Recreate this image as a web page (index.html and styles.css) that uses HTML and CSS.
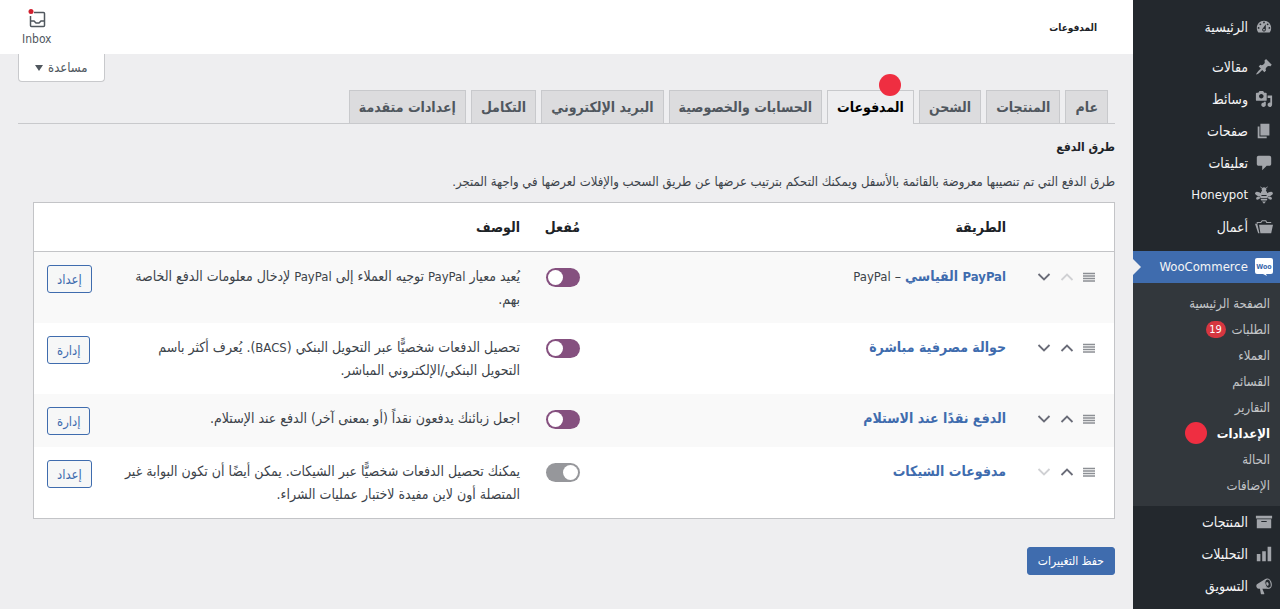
FILE: index.html
```
<!DOCTYPE html>
<html lang="ar" dir="rtl">
<head>
    <meta charset="UTF-8">
    <meta name="viewport" content="width=device-width, initial-scale=1.0">
    <title>المدفوعات</title>
    <link rel="stylesheet" href="styles.css">
</head>
<body>

    <svg class="sprite" aria-hidden="true">
        <symbol id="i-menu" viewBox="0 0 12 10"><path d="M0 1.500h12M0 4h12M0 6.500h12M0 9h12" stroke="currentColor" stroke-width="1.500"/></symbol>
        <symbol id="i-up" viewBox="0 0 14 10"><path d="M1.500 8L7 2.500L12.500 8" fill="none" stroke="currentColor" stroke-width="1.800"/></symbol>
        <symbol id="i-down" viewBox="0 0 14 10"><path d="M1.500 2L7 7.500L12.500 2" fill="none" stroke="currentColor" stroke-width="1.800"/></symbol>
    </svg>

    <nav class="sidebar">
        <ul class="menu">
            <li><a href="#"><svg class="icon" viewBox="0 0 20 20"><path d="M3.760 16h12.480c1.100-1.370 1.760-3.110 1.760-5 0-4.420-3.580-8-8-8s-8 3.580-8 8c0 1.890.66 3.630 1.760 5zM10 4c.55 0 1 .45 1 1s-.45 1-1 1-1-.45-1-1 .45-1 1-1zM6 6c.55 0 1 .45 1 1s-.45 1-1 1-1-.45-1-1 .45-1 1-1zm8 0c.55 0 1 .45 1 1s-.45 1-1 1-1-.45-1-1 .45-1 1-1zm-5.370 5.550L12 7v6c0 1.100-.9 2-2 2s-2-.9-2-2c0-.57.24-1.080.63-1.450zM4 10c.55 0 1 .45 1 1s-.45 1-1 1-1-.45-1-1 .45-1 1-1zm12 0c.55 0 1 .45 1 1s-.45 1-1 1-1-.45-1-1 .45-1 1-1zm-5 3c0-.55-.45-1-1-1s-1 .45-1 1 .45 1 1 1 1-.45 1-1z"/></svg>الرئيسية</a></li>
        </ul>
        <ul class="menu">
            <li><a href="#"><svg class="icon" viewBox="0 0 20 20"><path d="M10.440 3.020l1.820-1.820 6.360 6.350-1.830 1.820c-1.050-.68-2.480-.57-3.410.36l-.75.75c-.92.93-1.040 2.350-.35 3.410l-1.830 1.820-2.410-2.410-2.800 2.790c-.42.42-3.380 2.710-3.800 2.290s1.860-3.390 2.280-3.810l2.790-2.790L4.100 9.360l1.830-1.820c1.050.69 2.480.57 3.400-.36l.75-.75c.93-.92 1.050-2.350.36-3.410z"/></svg>مقالات</a></li>
            <li><a href="#"><svg class="icon" viewBox="0 0 20 20"><path d="M13 11V4c0-.55-.45-1-1-1h-1.670L9 1H5L3.670 3H2c-.55 0-1 .45-1 1v7c0 .55.45 1 1 1h10c.55 0 1-.45 1-1zM7 4.500c1.380 0 2.500 1.120 2.500 2.500S8.380 9.500 7 9.500 4.500 8.380 4.500 7 5.620 4.500 7 4.500zM14 6h5v10.500c0 1.380-1.120 2.500-2.500 2.500S14 17.880 14 16.500s1.120-2.500 2.500-2.500c.17 0 .34.020.5.050V9h-3V6zm-4 8.050V13h2v3.500c0 1.380-1.120 2.500-2.500 2.500S7 17.880 7 16.500 8.120 14 9.500 14c.17 0 .34.020.5.050z"/></svg>وسائط</a></li>
            <li><a href="#"><svg class="icon" viewBox="0 0 20 20"><path d="M6 15V2h10v13H6zm-1 1h8v2H3V5h2v11z"/></svg>صفحات</a></li>
            <li><a href="#"><svg class="icon" viewBox="0 0 20 20"><path d="M4 2h12c1.100 0 2 .9 2 2v7c0 1.100-.9 2-2 2h-3l-5 5v-5H4c-1.100 0-2-.9-2-2V4c0-1.100.9-2 2-2z"/></svg>تعليقات</a></li>
            <li><a href="#"><svg class="icon" viewBox="0 0 20 20"><circle cx="10" cy="4" r="2.600"/><path d="M6.500 8a3.500 3 0 0 1 7 0v2h-7zM5.500 11h9l-.5 2.200H6zM6 14.200h8L13 16.200H7zM7.800 17.200h4.400L10 19.700z"/><ellipse cx="3.800" cy="9" rx="3.800" ry="2.200" transform="rotate(20 3.800 9)"/><ellipse cx="16.200" cy="9" rx="3.800" ry="2.200" transform="rotate(-20 16.200 9)"/><ellipse cx="3.400" cy="13.400" rx="2.300" ry="1.600" transform="rotate(-25 3.400 13.400)"/><ellipse cx="16.600" cy="13.400" rx="2.300" ry="1.600" transform="rotate(25 16.600 13.400)"/><path d="M8.500 3L6 1M11.500 3L14 1" stroke="currentColor"/></svg><span class="latin">Honeypot</span></a></li>
            <li><a href="#"><svg class="icon" viewBox="0 0 20 20"><path d="M3.500 17L0 6.500h2.500L5 17zM4.500 7.500H20L18 17H6z"/><path d="M2.500 6.500V5h4L8 3h4l1 2h5" fill="none" stroke="currentColor" stroke-width="1.200"/></svg>أعمال</a></li>
        </ul>
        <ul class="menu">
            <li class="current">
                <a href="#"><svg class="icon woo" viewBox="0 0 18 18"><path d="M2 0h14a2 2 0 0 1 2 2v12a2 2 0 0 1-2 2h-5l1 2-4-2H2a2 2 0 0 1-2-2V2a2 2 0 0 1 2-2z"/><text x="9" y="11" text-anchor="middle">Woo</text></svg><span class="latin">WooCommerce</span></a>
                <ul class="submenu">
                    <li><a href="#">الصفحة الرئيسية</a></li>
                    <li><a href="#">الطلبات <span class="count">19</span></a></li>
                    <li><a href="#">العملاء</a></li>
                    <li><a href="#">القسائم</a></li>
                    <li><a href="#">التقارير</a></li>
                    <li><a href="#" class="active">الإعدادات <span class="dot"></span></a></li>
                    <li><a href="#">الحالة</a></li>
                    <li><a href="#">الإضافات</a></li>
                </ul>
            </li>
            <li><a href="#"><svg class="icon" viewBox="0 0 20 20"><path d="M19 3v3H1V3h18zM2 7h16v10H2V7zm11 3V9H7v1h6z"/></svg>المنتجات</a></li>
            <li><a href="#"><svg class="icon" viewBox="0 0 20 20"><path d="M18 18V2h-4v16h4zm-6 0V7H8v11h4zm-6 0v-8H2v8h4z"/></svg>التحليلات</a></li>
            <li><a href="#"><svg class="icon" viewBox="0 0 20 20"><path d="M12 2L3 7.400C1.600 8 1.200 9.600 1.600 10.900c.4 1.400 1.500 2.300 2.600 2.200h1.300l1 5.500c0 .3.200.5.500.5h3c.3 0 .5-.3.400-.5L8.200 13h7z"/><ellipse cx="14.500" cy="7.400" rx="3.400" ry="5.200" fill="#23282d" stroke="currentColor" stroke-width="1.300" transform="rotate(-15 14.500 7.400)"/><ellipse cx="13.800" cy="7.600" rx="1.300" ry="2.200" transform="rotate(-15 13.800 7.600)"/></svg>التسويق</a></li>
        </ul>
    </nav>

    <div class="content">
        <header class="topbar">
            <h1>المدفوعات</h1>
            <button class="inbox">
                <svg viewBox="0 0 20 20"><path d="M7 3.500h9.500a1 1 0 0 1 1 1v12a1 1 0 0 1-1 1h-12a1 1 0 0 1-1-1V7M3.500 12H7l2 2h3l2-2h3.500" fill="none" stroke="currentColor" stroke-width="1.500"/><circle cx="4" cy="2.500" r="2.500" fill="#d0202e"/></svg>
                Inbox
            </button>
        </header>

        <main class="wrap">
            <button class="help">مساعدة <span class="caret"></span></button>

            <nav class="tabs">
                <a href="#">عام</a>
                <a href="#">المنتجات</a>
                <a href="#">الشحن</a>
                <a href="#" class="active">المدفوعات<span class="dot"></span></a>
                <a href="#">الحسابات والخصوصية</a>
                <a href="#">البريد الإلكتروني</a>
                <a href="#">التكامل</a>
                <a href="#">إعدادات متقدمة</a>
            </nav>

            <h2>طرق الدفع</h2>
            <p class="intro">طرق الدفع التي تم تنصيبها معروضة بالقائمة بالأسفل ويمكنك التحكم بترتيب عرضها عن طريق السحب والإفلات لعرضها في واجهة المتجر.</p>

            <table class="gateways">
                <thead>
                    <tr>
                        <th class="sort"></th>
                        <th>الطريقة</th>
                        <th class="status">مُفعل</th>
                        <th>الوصف</th>
                        <th class="action"></th>
                    </tr>
                </thead>
                <tbody>
                    <tr>
                        <td><div class="handles"><svg class="grip"><use href="#i-menu"/></svg><button disabled aria-label="أعلى"><svg><use href="#i-up"/></svg></button><button aria-label="أسفل"><svg><use href="#i-down"/></svg></button></div></td>
                        <td><a href="#"><span class="latin">PayPal</span> القياسي</a> – <span class="latin">PayPal</span></td>
                        <td><input type="checkbox" class="toggle" aria-label="PayPal" checked></td>
                        <td>يُعيد معيار <span class="latin">PayPal</span> توجيه العملاء إلى <span class="latin">PayPal</span> لإدخال معلومات الدفع الخاصة بهم.</td>
                        <td class="action"><button class="button">إعداد</button></td>
                    </tr>
                    <tr>
                        <td><div class="handles"><svg class="grip"><use href="#i-menu"/></svg><button aria-label="أعلى"><svg><use href="#i-up"/></svg></button><button aria-label="أسفل"><svg><use href="#i-down"/></svg></button></div></td>
                        <td><a href="#">حوالة مصرفية مباشرة</a></td>
                        <td><input type="checkbox" class="toggle" aria-label="حوالة مصرفية مباشرة" checked></td>
                        <td>تحصيل الدفعات شخصيًّا عبر التحويل البنكي (<span class="latin">BACS</span>). يُعرف أكثر باسم التحويل البنكي/الإلكتروني المباشر.</td>
                        <td class="action"><button class="button">إدارة</button></td>
                    </tr>
                    <tr>
                        <td><div class="handles"><svg class="grip"><use href="#i-menu"/></svg><button aria-label="أعلى"><svg><use href="#i-up"/></svg></button><button aria-label="أسفل"><svg><use href="#i-down"/></svg></button></div></td>
                        <td><a href="#">الدفع نقدًا عند الاستلام</a></td>
                        <td><input type="checkbox" class="toggle" aria-label="الدفع نقدًا عند الاستلام" checked></td>
                        <td>اجعل زبائنك يدفعون نقداً (أو بمعنى آخر) الدفع عند الإستلام.</td>
                        <td class="action"><button class="button">إدارة</button></td>
                    </tr>
                    <tr>
                        <td><div class="handles"><svg class="grip"><use href="#i-menu"/></svg><button aria-label="أعلى"><svg><use href="#i-up"/></svg></button><button disabled aria-label="أسفل"><svg><use href="#i-down"/></svg></button></div></td>
                        <td><a href="#">مدفوعات الشيكات</a></td>
                        <td><input type="checkbox" class="toggle" aria-label="مدفوعات الشيكات"></td>
                        <td>يمكنك تحصيل الدفعات شخصيًّا عبر الشيكات. يمكن أيضًا أن تكون البوابة غير المتصلة أون لاين مفيدة لاختبار عمليات الشراء.</td>
                        <td class="action"><button class="button">إعداد</button></td>
                    </tr>
                </tbody>
            </table>

            <button class="button primary">حفظ التغييرات</button>
        </main>
    </div>

</body>
</html>
```
FILE: styles.css
```
* {
    margin: 0;
    padding: 0;
    box-sizing: border-box;
}

body {
    display: flex;
    min-height: 100vh;
    background: #eeeef0;
    color: #3c434a;
    font-family: "DejaVu Sans Condensed", "DejaVu Sans", sans-serif;
    font-size: 13px;
    line-height: 23px;
}

a {
    color: #3f6cae;
    text-decoration: none;
}

ul {
    list-style: none;
}

button {
    font-family: inherit;
    font-size: 13px;
    cursor: pointer;
}

.sprite {
    display: none;
}

/* latin glyphs look bigger than the arabic ones */
.latin {
    font-size: 13px;
    line-height: 20px;
}

.dot {
    width: 22px;
    height: 22px;
    border-radius: 50%;
    background: #ef2e41;
}

/* sidebar */
.sidebar {
    flex: 0 0 147px;
    padding-top: 11px;
    background: #23282d;
}

.menu {
    margin-bottom: 8px;
}

.menu:last-child {
    margin-bottom: 0;
}

.menu > li > a {
    display: flex;
    align-items: center;
    gap: 7px;
    height: 32px;
    padding-right: 7px;
    color: #f4f4f5;
    font-size: 14px;
}

.icon {
    width: 18px;
    height: 18px;
    color: #a2a5aa;
    fill: currentColor;
}

.woo {
    color: #fff;
}

.woo text {
    fill: #3f6cae;
    font-size: 7px;
    font-weight: bold;
}

.current {
    position: relative;
}

.current > a {
    background: #3f6cae;
}

.current::after {
    content: "";
    position: absolute;
    left: 0;
    top: 8px;
    border: 8px solid transparent;
    border-left-color: #eeeef0;
    border-right-width: 0;
}

.submenu {
    padding: 7px 10px 8px;
    background: #32373c;
}

.submenu a {
    display: flex;
    align-items: center;
    gap: 6px;
    height: 26px;
    color: #c3c5c8;
}

.submenu .active {
    color: #fff;
    font-weight: bold;
    gap: 10px;
}

.count {
    width: 20px;
    height: 17px;
    border-radius: 9px;
    background: #d63640;
    color: #fff;
    font-size: 11px;
    line-height: 17px;
    text-align: center;
}

/* page */
.content {
    flex: 1;
    min-width: 0;
}

.topbar {
    display: flex;
    align-items: center;
    justify-content: space-between;
    height: 54px;
    padding: 0 36px 0 22px;
    background: #fff;
}

.topbar h1 {
    color: #1d2327;
    font-size: 10px;
}

.inbox {
    display: flex;
    flex-direction: column;
    align-items: center;
    padding-top: 3px;
    border: 0;
    background: none;
    color: #50575e;
    font-size: 12px;
    line-height: 20px;
}

.inbox svg {
    width: 20px;
    height: 20px;
}

.wrap {
    display: flex;
    flex-direction: column;
    align-items: flex-start;
    padding: 0 18px;
}

.help {
    display: flex;
    align-items: center;
    align-self: flex-end;
    gap: 5px;
    height: 28px;
    padding: 0 16px;
    border: 1px solid #c8c9cc;
    border-top: 0;
    border-radius: 0 0 4px 4px;
    background: #fff;
    color: #50575e;
}

.caret {
    border: 4px solid transparent;
    border-top: 6px solid #50575e;
    border-bottom: 0;
}

.tabs {
    display: flex;
    align-self: stretch;
    gap: 5px;
    margin-top: 8px;
    padding-right: 7px;
    border-bottom: 1px solid #c8c9cc;
}

.tabs a {
    height: 33px;
    padding: 0 9px;
    border: 1px solid #c8c9cc;
    border-bottom: 0;
    background: #dcdcde;
    color: #50575e;
    font-size: 14px;
    font-weight: bold;
    line-height: 32px;
    white-space: nowrap;
}

.tabs .active {
    position: relative;
    margin-bottom: -1px;
    height: 34px;
    background: #eeeef0;
    color: #000;
}

.tabs .dot {
    position: absolute;
    top: -17px;
    right: 12px;
}

h2 {
    margin-top: 12px;
    color: #1d2327;
    font-size: 12px;
}

.intro {
    margin-top: 11px;
}

.gateways {
    align-self: stretch;
    table-layout: fixed;
    width: calc(100% - 15px);
    margin: 9px 0 28px 15px;
    border: 1px solid #c3c4c7;
    border-spacing: 0;
    background: #fff;
    font-size: 14px;
}

.gateways th {
    padding: 13px 13px 12px;
    border-bottom: 1px solid #c3c4c7;
    color: #1d2327;
    text-align: right;
}

.gateways td {
    padding: 13px 13px 12px;
    vertical-align: top;
}

.gateways td a {
    font-weight: bold;
}

.gateways tbody tr:nth-child(odd) {
    background: #f9f9f9;
}

.gateways .sort {
    width: 95px;
}

.gateways .status {
    width: 60px;
    white-space: nowrap;
}

.gateways .action {
    width: 73px;
    padding-right: 0;
    text-align: left;
}

.handles {
    display: flex;
    align-items: center;
    gap: 9px;
    height: 23px;
    padding-right: 6px;
    color: #8c8f94;
}

.handles .grip {
    width: 12px;
    height: 10px;
}

.handles button {
    display: flex;
    border: 0;
    background: none;
    color: #6a6c78;
}

.handles button:disabled {
    color: #d0d1d4;
}

.handles button svg {
    width: 14px;
    height: 10px;
}

.toggle {
    appearance: none;
    display: flex;
    width: 34px;
    height: 19px;
    margin-top: 3px;
    border-radius: 10px;
    background: #96979b;
    cursor: pointer;
}

.toggle::before {
    content: "";
    width: 15px;
    height: 15px;
    margin: 2px;
    border-radius: 50%;
    background: #fff;
}

.toggle:checked {
    justify-content: flex-end;
    background: #85507f;
}

.button {
    height: 28px;
    padding: 0 9px;
    border: 1px solid #3f6cae;
    border-radius: 3px;
    background: #f6f7f7;
    color: #3f6cae;
}

.primary {
    padding: 0 10px;
    background: #3f6cae;
    color: #fff;
    font-size: 12px;
}
```
